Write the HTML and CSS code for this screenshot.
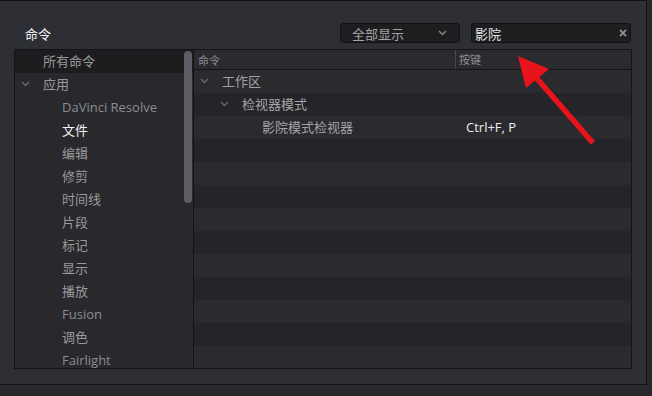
FILE: index.html
```html
<!DOCTYPE html>
<html lang="zh">
<head>
<meta charset="utf-8">
<link rel="stylesheet" href="styles.css">
</head>
<body>
<div class="dialog">
  <div class="topbar">
    <div class="title">命令</div>
    <div class="controls">
      <div class="select">
        <span>全部显示</span>
        <svg class="chev" width="9" height="6" viewBox="0 0 9 6"><polyline points="1,1 4.5,4.5 8,1" fill="none" stroke="#8a8a8e" stroke-width="1.4"/></svg>
      </div>
      <div class="search">
        <span>影院</span>
        <svg class="clear" width="8" height="8" viewBox="0 0 8 8"><path d="M1 1L7 7M7 1L1 7" stroke="#8d8d90" stroke-width="1.8"/></svg>
      </div>
    </div>
  </div>
  <div class="content">
    <div class="tree">
      <div class="trow sel"><span class="lvl0">所有命令</span></div>
      <div class="trow"><svg class="tchev" width="9" height="6" viewBox="0 0 9 6"><polyline points="1,1 4.5,4.5 8,1" fill="none" stroke="#6a6a6e" stroke-width="1.3"/></svg><span class="lvl0">应用</span></div>
      <div class="trow"><span class="lvl1 latin">DaVinci Resolve</span></div>
      <div class="trow"><span class="lvl1 active">文件</span></div>
      <div class="trow"><span class="lvl1">编辑</span></div>
      <div class="trow"><span class="lvl1">修剪</span></div>
      <div class="trow"><span class="lvl1">时间线</span></div>
      <div class="trow"><span class="lvl1">片段</span></div>
      <div class="trow"><span class="lvl1">标记</span></div>
      <div class="trow"><span class="lvl1">显示</span></div>
      <div class="trow"><span class="lvl1">播放</span></div>
      <div class="trow"><span class="lvl1 latin">Fusion</span></div>
      <div class="trow"><span class="lvl1">调色</span></div>
      <div class="trow"><span class="lvl1 latin">Fairlight</span></div>
      <div class="scrollbar"></div>
    </div>
    <div class="table">
      <div class="thead">
        <div class="hcmd">命令</div>
        <div class="hkey">按键</div>
      </div>
      <div class="rows">
        <div class="row"><div class="cmd i0"><svg class="rchev" width="9" height="6" viewBox="0 0 9 6"><polyline points="1,1 4.5,4.5 8,1" fill="none" stroke="#6a6a6e" stroke-width="1.3"/></svg>工作区</div><div class="key"></div></div>
        <div class="row"><div class="cmd i1"><svg class="rchev" width="9" height="6" viewBox="0 0 9 6"><polyline points="1,1 4.5,4.5 8,1" fill="none" stroke="#6a6a6e" stroke-width="1.3"/></svg>检视器模式</div><div class="key"></div></div>
        <div class="row"><div class="cmd i2">影院模式检视器</div><div class="key">Ctrl+F, P</div></div>
        <div class="row"></div>
        <div class="row"></div>
        <div class="row"></div>
        <div class="row"></div>
        <div class="row"></div>
        <div class="row"></div>
        <div class="row"></div>
        <div class="row"></div>
        <div class="row"></div>
        <div class="row"></div>
      </div>
    </div>
  </div>
  <svg class="arrow" width="652" height="396" viewBox="0 0 652 396">
    <line x1="593" y1="143" x2="533" y2="74" stroke="#e8131b" stroke-width="5.5"/>
    <polygon points="518,56 549,69 526,88" fill="#e8131b"/>
  </svg>
</div>
</body>
</html>
```
FILE: styles.css
```css
html, body {
  margin: 0;
  padding: 0;
  background: #28282d;
  width: 652px;
  height: 396px;
  overflow: hidden;
  font-family: "Noto Sans CJK SC", "Noto Sans", sans-serif;
  font-size: 13px;
}
.dialog {
  width: 646px;
  height: 383px;
  background: #2e2f34;
  border-top: 1px solid #121214;
  border-right: 1px solid #121214;
  border-bottom: 1px solid #121214;
  box-sizing: content-box;
  position: relative;
}
.topbar {
  height: 48px;
  display: flex;
  align-items: flex-start;
}
.title {
  color: #f2f2f2;
  margin-left: 25px;
  margin-top: 24px;
  line-height: 18px;
}
.controls {
  margin-left: auto;
  margin-right: 15px;
  margin-top: 22px;
  display: flex;
  gap: 11px;
}
.select, .search {
  height: 18px;
  background: #1e1e21;
  border: 1px solid #121214;
  border-radius: 3px;
  display: flex;
  align-items: center;
  box-sizing: content-box;
}
.select {
  width: 118px;
  color: #a2a2a4;
}
.select span {
  margin-left: 11px;
}
.select .chev {
  margin-left: auto;
  margin-right: 12px;
}
.search {
  width: 158px;
  color: #e4e4e4;
}
.search span {
  margin-left: 3px;
}
.search .clear {
  margin-left: auto;
  margin-right: 3px;
}
.content {
  margin-left: 14px;
  width: 616px;
  height: 318px;
  border: 1px solid #141416;
  display: flex;
}
.tree {
  width: 178px;
  background: #28282d;
  position: relative;
  overflow: hidden;
}
.trow {
  height: 23px;
  box-sizing: border-box;
  padding-bottom: 2px;
  display: flex;
  align-items: center;
  color: #9a9a9b;
  position: relative;
}
.trow.sel {
  background: #1d1d20;
}
.lvl0 {
  margin-left: 28px;
}
.tchev {
  position: absolute;
  left: 6px;
  top: 8px;
}
.lvl1 {
  margin-left: 47px;
}
.latin {
  color: #8c8d91;
  font-family: "Open Sans", "Noto Sans", sans-serif;
}
.active {
  color: #f4f4f4;
}
.scrollbar {
  position: absolute;
  left: 169px;
  top: 1px;
  width: 8px;
  height: 152px;
  border-radius: 4px;
  background: #5b5e65;
}
.table {
  flex: 1;
  border-left: 1px solid #141416;
  display: flex;
  flex-direction: column;
}
.thead {
  height: 19px;
  border-bottom: 1px solid #141416;
  display: flex;
  align-items: center;
  font-size: 11px;
  color: #8d8f96;
  background: #2a2a2f;
}
.hcmd {
  width: 261px;
  padding-left: 4px;
  box-sizing: border-box;
}
.hkey {
  border-left: 1px solid #47474c;
  height: 19px;
  line-height: 19px;
  padding-left: 3px;
}
.rows {
  flex: 1;
  overflow: hidden;
}
.row {
  height: 23px;
  box-sizing: border-box;
  padding-bottom: 2px;
  display: flex;
  align-items: center;
  color: #a4a4a6;
  background: #2a2a2f;
}
.row:nth-child(even) {
  background: #252529;
}
.cmd {
  width: 272px;
  position: relative;
  box-sizing: border-box;
}
.cmd.i0 { padding-left: 28px; }
.cmd.i1 { padding-left: 48px; }
.cmd.i2 { padding-left: 68px; }
.rchev {
  position: absolute;
  top: 7px;
}
.i0 .rchev { left: 6px; }
.i1 .rchev { left: 26px; }
.key {
  color: #ececec;
  font-family: "Open Sans", "Noto Sans", sans-serif;
}
.arrow {
  position: absolute;
  left: 0;
  top: -1px;
  pointer-events: none;
}
```
